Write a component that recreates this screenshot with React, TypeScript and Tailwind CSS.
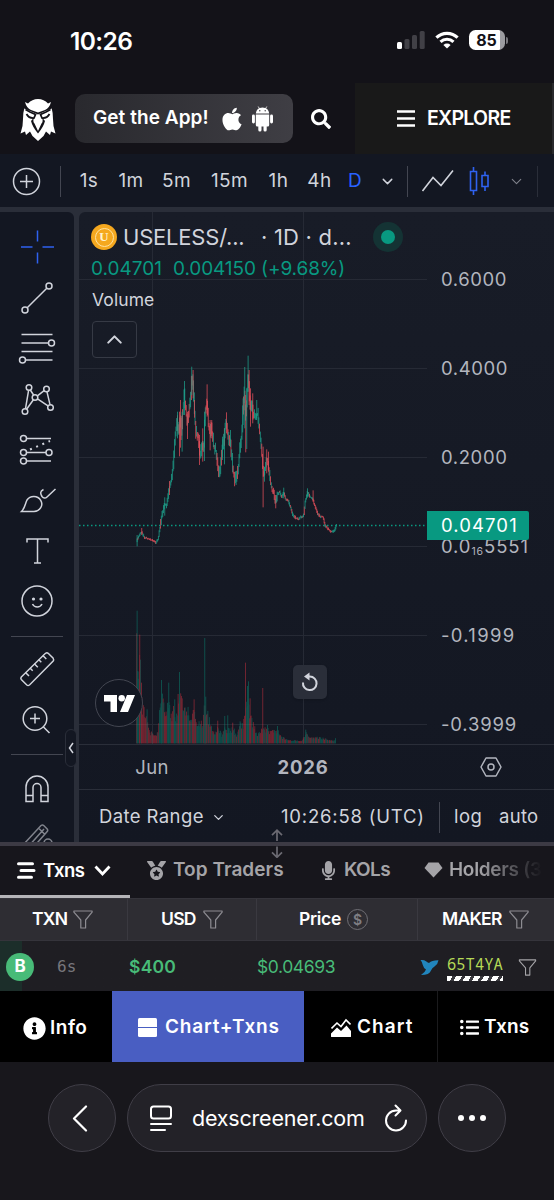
import React from "react";
import {
  FaApple,
  FaInfoCircle,
  FaListUl,
  FaMedal,
  FaMicrophone,
  FaSearch,
} from "react-icons/fa";
import { ChevronDown, ChevronUp } from "lucide-react";

// [x, y] of the price line, three units to a pixel
const PRICE: number[][] = [
  [35, 588], [42, 572], [50, 560], [58, 577], [75, 582], [93, 593], [100, 580],
  [105, 548], [112, 505], [118, 480], [125, 478], [133, 430], [140, 400],
  [147, 335], [150, 275], [156, 230], [161, 265], [166, 215], [169, 270],
  [174, 190], [178, 150], [182, 190], [187, 225], [193, 190], [197, 160],
  [200, 105], [204, 110], [208, 190], [213, 260], [220, 270], [225, 330],
  [232, 300], [237, 310], [240, 220], [243, 190], [246, 165], [250, 230],
  [255, 265], [260, 245], [266, 300], [273, 320], [279, 370], [285, 385],
  [290, 320], [294, 305], [300, 260], [304, 230], [308, 260], [312, 280],
  [318, 310], [324, 375], [330, 405], [336, 388], [340, 370], [345, 310],
  [350, 280], [354, 200], [358, 130], [362, 220], [366, 150], [370, 85],
  [374, 160], [378, 195], [382, 175], [386, 215], [392, 210], [398, 205],
  [404, 255], [410, 310], [414, 380], [418, 390], [424, 340], [428, 345],
  [434, 390], [440, 430], [446, 440], [452, 472], [458, 445], [464, 440],
  [470, 458], [476, 442], [482, 462], [490, 467], [498, 490], [504, 510],
  [512, 518], [520, 522], [528, 515], [536, 512], [541, 470], [548, 440],
  [554, 455], [562, 458], [570, 482], [578, 505], [586, 515], [594, 515],
  [600, 540], [608, 550], [618, 560], [628, 558], [634, 542],
];

// x, high, low, up
const SPIKES: [number, number, number, boolean][] = [
  [36, 570, 604, true],
  [50, 549, 570, false],
  [119, 457, 512, true],
  [133, 408, 450, false],
  [157, 200, 280, true],
  [163, 200, 334, false],
  [166, 165, 308, false],
  [171, 200, 320, true],
  [178, 108, 210, true],
  [187, 200, 282, false],
  [200, 65, 150, true],
  [204, 75, 160, false],
  [208, 165, 218, false],
  [223, 270, 360, false],
  [233, 250, 350, false],
  [238, 200, 348, true],
  [246, 118, 215, false],
  [255, 225, 316, false],
  [260, 225, 280, false],
  [292, 275, 345, true],
  [298, 250, 358, true],
  [304, 202, 265, false],
  [316, 255, 305, true],
  [354, 160, 240, true],
  [359, 66, 250, true],
  [362, 150, 322, false],
  [365, 130, 312, true],
  [369, 32, 140, true],
  [372, 75, 180, false],
  [376, 130, 245, false],
  [383, 145, 235, false],
  [395, 165, 220, true],
  [414, 305, 487, false],
  [418, 365, 410, true],
  [425, 313, 385, false],
  [430, 320, 380, false],
  [452, 450, 490, false],
  [476, 428, 460, true],
  [547, 430, 458, true],
  [564, 436, 470, false],
];

// x, height
const VOLUME: number[][] = [
  [184, 330], [188, 300], [194, 300], [197, 190], [200, 140], [207, 100],
  [213, 85], [216, 90], [222, 40], [230, 35], [240, 25], [248, 35], [252, 100],
  [259, 150], [263, 140], [270, 110], [280, 130], [290, 85], [296, 120],
  [305, 80], [313, 170], [318, 140], [326, 110], [333, 115], [340, 110],
  [346, 80], [357, 110], [364, 60], [373, 80], [380, 60], [388, 130],
  [392, 130], [397, 95], [405, 75], [412, 35], [428, 50], [440, 30], [449, 55],
  [458, 45], [473, 50], [485, 28], [495, 60], [503, 60], [507, 95], [511, 140],
  [516, 160], [520, 140], [525, 90], [535, 60], [545, 28], [560, 45],
  [570, 48], [590, 42], [600, 38], [607, 42], [615, 25], [630, 14], [650, 10],
  [680, 8], [688, 30], [692, 36], [700, 24], [715, 20], [730, 19], [745, 17],
  [760, 10], [775, 8], [781, 18],
];

const VOLUME_SPIKES: [number, number, boolean][] = [
  [186, 398, true],
  [194, 326, false],
  [199, 182, false],
  [216, 102, true],
  [259, 190, true],
  [281, 182, true],
  [299, 132, true],
  [313, 214, true],
  [309, 148, false],
  [357, 132, false],
  [389, 316, true],
  [392, 140, true],
  [428, 68, false],
  [449, 82, true],
  [458, 84, true],
  [473, 62, false],
  [495, 66, true],
  [511, 242, false],
  [517, 172, true],
  [520, 186, true],
  [525, 135, false],
  [563, 166, false],
  [577, 55, true],
  [607, 52, true],
  [692, 41, true],
];

const UP = "#089981";
const DOWN = "#f23645";

const noise = (n: number) => {
  const v = Math.sin(n * 12.9898) * 43758.5453;
  return v - Math.floor(v);
};

const sample = (points: number[][], x: number) => {
  let i = 1;
  while (i < points.length - 1 && points[i][0] < x) i++;
  const [x0, y0] = points[i - 1];
  const [x1, y1] = points[i];
  return y0 + ((y1 - y0) * (x - x0)) / (x1 - x0);
};

const Candles = () => {
  const bars = [];
  for (let x = 35; x <= 634; x += 2.2) {
    const y = sample(PRICE, x);
    const next = sample(PRICE, x + 2.2);
    const reach = x > 145 && x < 400 ? 20 : x > 105 && x < 460 ? 11 : 4;
    const top = Math.min(y, next) - reach * noise(x);
    const bottom = Math.max(y, next) + reach * noise(x + 5) + 1;
    const up = next < y ? noise(x + 9) > 0.2 : noise(x + 9) > 0.7;
    bars.push(
      <rect key={x} x={x} y={top} width={2.6} height={bottom - top} fill={up ? "#1ea18c" : "#e8505c"} opacity={0.9} />
    );
  }
  return (
    <g transform="translate(46 133) scale(0.33333)">
      {bars}
      {SPIKES.map(([x, high, low, up]) => (
        <rect key={x} x={x - 1} y={high} width={2.6} height={low - high} fill={up ? "#1ea18c" : "#e8505c"} opacity={0.85} />
      ))}
    </g>
  );
};

const Volume = () => {
  const bars = [];
  for (let x = 184; x <= 781; x += 2.2) {
    const h = sample(VOLUME, x) * (0.62 + 0.42 * noise(x + 2));
    const up = noise(x + 7) > (x > 200 && x < 245 ? 0.85 : 0.45);
    bars.push(
      <rect key={x} x={x} y={430 - h} width={2.4} height={h} fill={up ? UP : DOWN} />
    );
  }
  return (
    <g transform="translate(-4 388) scale(0.33333)" opacity={0.48}>
      {bars}
      {VOLUME_SPIKES.map(([x, h, up]) => (
        <rect key={x} x={x - 1} y={430 - h} width={2.6} height={h} fill={up ? UP : DOWN} />
      ))}
    </g>
  );
};

const Funnel = ({ className = "" }: { className?: string }) => (
  <svg width="20" height="19" viewBox="0 0 20 19" fill="none" stroke="currentColor" strokeWidth="1.2" className={className}>
    <path d="M.9 1h18.2v1.2L12.6 10v8H7.8v-8L.9 2.2z" strokeLinejoin="round" />
  </svg>
);

const Tool = ({ children }: { children: React.ReactNode }) => (
  <button className="flex h-[50.6px] w-[73px] shrink-0 items-center justify-center">
    <svg width="40" height="40" viewBox="0 0 40 40" fill="none" stroke="#d1d4dc" strokeWidth="1.5">
      {children}
    </svg>
  </button>
);

const StatusBar = () => (
  <div className="flex h-[83px] items-start justify-between pt-[26px] pr-[46px] pl-[70px] text-white">
    <span className="text-[24.5px] leading-[30px] font-semibold tracking-[-0.6px]">10:26</span>
    <div className="flex items-center gap-[10px] pt-[4px]">
      <svg width="28" height="20" viewBox="0 0 28 20">
        <rect x="0" y="12" width="5" height="7" rx="1.5" fill="#fff" />
        <rect x="7.5" y="9" width="5" height="10" rx="1.5" fill="#414046" />
        <rect x="15" y="5" width="5" height="14" rx="1.5" fill="#414046" />
        <rect x="22.7" y="1" width="5" height="18" rx="1.5" fill="#414046" />
      </svg>
      <svg width="24" height="18" viewBox="0 0 24 18" fill="none" stroke="#fff" strokeWidth="3.1">
        <path d="M1.4 6.6a15.3 15.3 0 0 1 21.2 0" />
        <path d="M5.5 10.9a9.4 9.4 0 0 1 13 0" />
        <path d="M12 17.6l-3.6-3.7a5.2 5.2 0 0 1 7.2 0z" fill="#fff" stroke="none" />
      </svg>
      <div className="flex items-center gap-[1px]">
        <div className="flex h-5 w-[36px] items-center justify-center rounded-[6.5px] bg-linear-to-r from-white from-85% to-[#9b9ba0] to-85% pr-[1px] text-[16px] font-bold text-[#131218]">
          85
        </div>
        <div className="h-[7px] w-[2px] rounded-r-full bg-[#77767c]" />
      </div>
    </div>
  </div>
);

const Header = () => (
  <header className="flex h-[71px] text-white">
    <div className="flex w-[355px] items-center pl-[20px]">
      <svg width="36" height="46" viewBox="0 0 36 46" fill="#fff">
        <path d="M5 6l3 1.500Q12 3 18 3t10 4.500L31 6q-1.500 6-6 8l-7 2.500L11 14Q6.500 12 5 6z" />
        <path d="M4.300 12.500L10 15l8 3.500L26 15l5.700-2.500q1.300 4 1.300 10.500l.5 7 2 7.500-4.500-2-1 3.500-4-3.500L23.500 40 18 45l-5.500-5-2.500-4.500L6 39l-1-3.500-4.500 2 2-7.500.5-7q0-6.500 1.300-10.500z" />
        <path d="M5.500 13.500L10 16l5.500 2.500L14 22q-5 .5-7.500-4M30.500 13.500L26 16l-5.500 2.500L22 22q5 .5 7.500-4" fill="none" stroke="#131218" strokeWidth="1.800" />
        <path d="M14 21.500l-3 3.500q1.500 6 7 12.500 5.500-6.500 7-12.500l-3-3.500q1.500 4-.5 6L18 35l-3.500-7.500q-2-2-.5-6z" fill="#131218" />
      </svg>
      <div className="ml-[19px] flex h-[49px] w-[218px] items-center rounded-[10px] bg-linear-to-r from-[#29292e] to-[#3f3e44] pl-[18px]">
        <span className="w-[128px] text-[19px] font-semibold whitespace-nowrap tracking-[0.05px]">Get the App!</span>
        <FaApple className="h-[26px] w-[22px]" />
        <svg className="ml-[9px]" width="21" height="26" viewBox="0 0 21 26" fill="#fff">
          <path d="M3.800 7.500Q4.500 1.500 10.500 1.500t6.700 6zM3.800 8.500h13.400v10.500q0 1.500-1.500 1.500H5.300q-1.500 0-1.500-1.500z" />
          <path d="M6.200.5l1.500 2.500M14.800.5L13.300 3" stroke="#fff" strokeWidth=".8" />
          <rect x="0" y="8.500" width="2.900" height="9" rx="1.400" />
          <rect x="18.100" y="8.500" width="2.900" height="9" rx="1.400" />
          <rect x="6.300" y="17" width="3.200" height="8.500" rx="1.500" />
          <rect x="11.500" y="17" width="3.200" height="8.500" rx="1.500" />
          <circle cx="7.800" cy="4.800" r=".7" fill="#3a393f" />
          <circle cx="13.200" cy="4.800" r=".7" fill="#3a393f" />
        </svg>
      </div>
      <FaSearch className="ml-[18px] size-[20px]" />
    </div>
    <div className="flex w-[197px] items-center bg-[#191919] pl-[42px]">
      <svg width="18" height="17" viewBox="0 0 18 17" stroke="#fff" strokeWidth="2.300">
        <path d="M0 1.500h18M0 8.500h18M0 15.500h18" />
      </svg>
      <span className="ml-[12px] text-[19.500px] font-semibold tracking-[-0.700px]">EXPLORE</span>
    </div>
    <div className="w-[2px] bg-[#29292c]" />
  </header>
);

const IntervalBar = () => (
  <div className="flex h-[53px] items-center bg-[#131722] pt-px text-[19px] text-[#d1d4dc]">
    <div className="flex w-[60px] items-center pl-[12px]">
      <svg width="29" height="29" viewBox="0 0 29 29" fill="none" stroke="currentColor" strokeWidth="1.500">
        <circle cx="14.500" cy="14.500" r="13" />
        <path d="M14.500 8v13M8 14.500h13" />
      </svg>
    </div>
    <div className="mr-[9px] h-[31px] w-px bg-[#434651]" />
    <div className="flex pt-px tracking-[0.400px]">
      <button className="w-[38px]">1s</button>
      <button className="w-[46px]">1m</button>
      <button className="w-[45px]">5m</button>
      <button className="w-[61px]">15m</button>
      <button className="w-[37px]">1h</button>
      <button className="w-[45px]">4h</button>
      <button className="w-[26px] text-[#2962ff]">D</button>
    </div>
    <ChevronDown className="ml-[11px] size-[17px]" strokeWidth={2} />
    <div className="ml-[11px] h-[31px] w-px bg-[#434651]" />
    <svg className="ml-[13px]" width="34" height="24" viewBox="0 0 34 24" fill="none" stroke="currentColor" strokeWidth="1.600">
      <path d="M1.500 22L12 8.500l8 8L32 1.500" />
    </svg>
    <svg className="ml-[14px]" width="22" height="30" viewBox="0 0 22 30" fill="none" stroke="#2f62f0" strokeWidth="1.600">
      <path d="M1.500 5.500h6v19h-6zM4.500 1v4.500M4.500 24.500V29M13 9.500h6v11h-6zM16 5.500v4M16 20.500V25" />
    </svg>
    <ChevronDown className="ml-[17px] size-[17px] text-[#80838c]" strokeWidth={1.500} />
    <div className="ml-[12px] h-[31px] w-px bg-[#2a2e39]" />
  </div>
);

const DrawingTools = () => (
  <aside className="relative h-[630px] w-[73.500px] rounded-tr-[6px] bg-[#131722]">
    <div className="flex h-full w-full flex-col overflow-hidden pt-[10px]">
      <Tool>
        <path d="M20.500 3.500v11M20.500 25.500v11M4 20h11.500M25.500 20H37" stroke="#2f62f0" />
      </Tool>
      <Tool>
        <circle cx="8" cy="32" r="3" />
        <circle cx="32" cy="8" r="3" />
        <path d="M10.200 29.800L29.800 10.200" />
      </Tool>
      <Tool>
        <path d="M4.500 6.500h31M4.500 15h27M4.500 23.500h31M8.500 32h27" />
        <circle cx="34.500" cy="15" r="3" />
        <circle cx="5.500" cy="32" r="3" />
      </Tool>
      <Tool>
        <circle cx="12" cy="8.500" r="2.800" />
        <circle cx="29.500" cy="10" r="2.800" />
        <circle cx="18" cy="18.500" r="2.800" />
        <circle cx="8" cy="32.500" r="2.800" />
        <circle cx="33.500" cy="28.500" r="2.800" />
        <path d="M11.600 11.300L8.500 29.700M13.300 11l3.300 5M20.400 16.900l6.700-5.200M9.600 30.200l6.800-9.400M20.500 19.900l10.500 7M30 12.800l3 12.900" />
      </Tool>
      <Tool>
        <path d="M9 8.500h25M9 22.500h21M9 31h25" />
        <path d="M13 19.500L33 11" strokeDasharray="2 4.700" strokeWidth="2" />
        <circle cx="6.500" cy="8.500" r="3" fill="#131722" />
        <circle cx="6.500" cy="22.500" r="3" fill="#131722" />
        <circle cx="32" cy="22.500" r="3" fill="#131722" />
        <circle cx="6.500" cy="31" r="3" fill="#131722" />
      </Tool>
      <Tool>
        <path d="M4.500 31.500h12.500a8 7.500 0 1 0-7-11.500c-2 4-2 8-5.500 11.500z" />
        <path d="M26.500 9.500c-4 2-3 4.500-1.500 7 1.500 2 3.500 2 5 .5L38.500 9" />
      </Tool>
      <Tool>
        <path d="M10 11.500V8h21v3.500M20.500 8v24M17 32h7" />
      </Tool>
      <Tool>
        <circle cx="20" cy="20" r="15" />
        <circle cx="16.500" cy="18" r="1.600" fill="#d1d4dc" stroke="none" />
        <circle cx="24" cy="18" r="1.600" fill="#d1d4dc" stroke="none" />
        <path d="M15.500 23c2 4 7.500 4 9.500 0" />
      </Tool>
      <div className="mx-[11px] mt-[9px] mb-[7px] h-px shrink-0 bg-[#434651]" />
      <Tool>
        <path d="M4.300 28L28.500 4.300q1.500-1 2.700 0l5 5q1 1.500 0 2.700L12.500 36q-1.500 1-2.700 0l-5.500-5.500q-1-1.200 0-2.500z" />
        <path d="M8.500 23.500l3.500 3.500M13 19l2.700 2.700M17.300 14.800l3.500 3.500M21.600 10.500l2.700 2.700M25.800 6.500l3.500 3.500" />
      </Tool>
      <Tool>
        <circle cx="18" cy="18.500" r="11.800" />
        <path d="M18 13.500v10M13 18.500h10M26.500 27l6 6" />
      </Tool>
      <div className="mx-[11px] mt-[9px] mb-[9px] h-px shrink-0 bg-[#434651]" />
      <Tool>
        <path d="M9 32.500V18a11 11 0 0 1 22 0v14.500h-7V18.500a4 4 0 0 0-8 0v14zM9 26.500h7M24 26.500h7" />
      </Tool>
      <Tool>
        <g stroke="#80838c" transform="translate(0 -4)">
          <path d="M6 29L24 9.500q1.500-1 2.700 0l3.500 3.500q1 1.300 0 2.600L13 35M10 32L27 13M21.500 12l6 6" />
          <circle cx="31" cy="27" r="4" />
        </g>
      </Tool>
    </div>
    <button className="absolute top-[517px] -right-[3.500px] flex h-[38px] w-[12px] items-center justify-center rounded-[6px] border-[1.500px] border-[#2a2e39] bg-[#131722]">
      <svg width="6" height="12" viewBox="0 0 6 12" fill="none" stroke="#d1d4dc" strokeWidth="1.500">
        <path d="M5 1L1.500 6 5 11" />
      </svg>
    </button>
  </aside>
);

const PriceChart = () => (
  <div className="relative h-[532px] w-[348px]">
    <svg width="348" height="532" viewBox="0 0 348 532">
      <g stroke="#262a35" strokeWidth="1">
        <path d="M73.500 0v532M224.500 0v532" />
        <path d="M0 67.500h348M0 156.500h348M0 245.500h348M0 334.500h348M0 423.500h348M0 512.500h348" />
      </g>
      <Volume />
      <Candles />
      <path d="M0 313.500h348" stroke={UP} strokeWidth="1.500" strokeDasharray="1.500 2.500" />
    </svg>
    <div className="absolute top-[9px] left-[12px] w-[330px] text-[#d1d4dc]">
      <div className="flex h-[32px] items-center text-[22px] whitespace-pre">
        <span className="flex size-[26px] shrink-0 items-center justify-center rounded-full bg-[#f5a81f]">
          <span className="flex size-[19px] items-center justify-center rounded-full border border-[#ffe2a0] font-['Liberation_Serif'] text-[13px] font-bold text-[#fff3d0]">
            U
          </span>
        </span>
        <span className="ml-[6px] w-[138px] shrink-0 tracking-[-0.200px]">USELESS/...</span>
        <span className="w-[112px] shrink-0 tracking-[0.200px]">· 1D · d...</span>
        <span className="flex size-[30px] shrink-0 items-center justify-center rounded-full bg-[#143334]">
          <span className="size-[14px] rounded-full bg-[#089981]" />
        </span>
      </div>
      <div className="mt-[4px] flex h-[24px] items-center text-[19px] text-[#089981]">
        <span className="w-[82px]">0.04701</span>
        <span className="whitespace-nowrap tracking-[-0.100px]">0.004150 (+9.68%)</span>
      </div>
      <div className="mt-[8px] ml-px text-[17.500px] leading-[22px] tracking-[0.100px]">Volume</div>
      <button className="mt-[10px] ml-px flex h-[37px] w-[45px] items-center justify-center rounded-[4px] border-[1.500px] border-[#363a45]">
        <ChevronUp className="size-[25px]" strokeWidth={2} />
      </button>
    </div>
    <div className="absolute top-[467px] left-[16px] flex size-[48px] items-center justify-center rounded-full border-[1.500px] border-[#434651] bg-[#131722]">
      <svg width="31" height="17" viewBox="0 0 31 17" fill="#fff">
        <path d="M0 0h13v17H6.500V6.500H0zM23 0h8l-7 17h-8z" />
        <circle cx="17.700" cy="3.200" r="3.200" />
      </svg>
    </div>
    <button className="absolute top-[453px] left-[214px] flex size-[34px] items-center justify-center rounded-[5px] bg-[#2a2e39] shadow">
      <svg width="18" height="20" viewBox="0 0 18 20" fill="none" stroke="#d1d4dc" strokeWidth="2">
        <path d="M2 10.500A6.800 6.800 0 1 0 8.800 4.500H6" />
        <path d="M8.500 .5v8L3 4.500z" fill="#d1d4dc" stroke="none" />
      </svg>
    </button>
  </div>
);

const PriceAxis = () => (
  <div className="relative h-[532px] w-[127px] overflow-hidden pt-[23px] pl-[14px] text-[18.500px] tracking-[0.600px] text-[#b2b5be]">
    <div className="flex h-[89px] items-center">0.6000</div>
    <div className="flex h-[89px] items-center">0.4000</div>
    <div className="flex h-[89px] items-center">0.2000</div>
    <div className="flex h-[89px] items-center">
      <span className="tracking-[0.900px]">
        0.0<sub className="text-[10.500px]">16</sub>5551
      </span>
    </div>
    <div className="flex h-[89px] items-center tracking-[1.300px]">-0.1999</div>
    <div className="flex h-[89px] items-center tracking-[0.800px]">-0.3999</div>
    <div className="absolute top-[299px] left-0 flex h-[29px] w-[102px] items-center rounded-r-[2px] bg-[#089981] pt-px pl-[14px] tracking-[1.100px] text-white">
      0.04701
    </div>
  </div>
);

const ChartPanel = () => (
  <section className="w-[475px] rounded-tl-[6px] bg-linear-to-b from-[#181c27] to-[#131722]">
    <div className="flex h-[532px]">
      <PriceChart />
      <PriceAxis />
    </div>
    <div className="flex h-[46px] items-center border-y border-[#2a2e39] text-[18.500px] text-[#b2b5be]">
      <span className="w-[146px] pt-px text-center tracking-[0.300px]">Jun</span>
      <span className="w-[156px] pt-px text-center font-bold tracking-[0.800px]">2026</span>
      <svg className="ml-[99px]" width="22" height="20" viewBox="0 0 22 20" fill="none" stroke="currentColor" strokeWidth="1.500">
        <path d="M6 1h10l5 9-5 9H6l-5-9z" strokeLinejoin="round" />
        <circle cx="11" cy="10" r="3" />
      </svg>
    </div>
    <div className="flex h-[52px] items-center pt-[2px] pl-[20px] text-[18.500px] whitespace-nowrap text-[#d1d4dc]">
      <span className="w-[112px] tracking-[0.400px]">Date Range</span>
      <ChevronDown className="size-[15px]" strokeWidth={2} />
      <span className="ml-[55px] w-[158px] tracking-[0.800px]">10:26:58 (UTC)</span>
      <span className="mr-[14px] h-[31px] w-px bg-[#434651]" />
      <span className="w-[45px] tracking-[0.500px]">log</span>
      <span className="tracking-[0.300px]">auto</span>
    </div>
  </section>
);

const Tabs = () => (
  <nav className="relative flex h-[56px] border-t-4 border-[#3c3a44] bg-[#17161c] text-[19px] font-semibold whitespace-nowrap text-[#a5a4a8]">
    <svg className="absolute -top-[17px] left-[271px]" width="12" height="29" viewBox="0 0 12 29" fill="none" stroke="#6b6a72" strokeWidth="1.700">
      <path d="M6 12V1.500M1 6.200l5-5 5 5M6 17.500V28M1 23.300l5 5 5-5" />
    </svg>
    <div className="flex w-[130px] items-center border-b-[3px] border-[#b5b4b8] pl-[17px] text-white">
      <svg width="19" height="17" viewBox="0 0 19 17" stroke="#fff" strokeWidth="3" strokeLinecap="round">
        <path d="M1.500 1.700h14M4 8.500h13M1.500 15.300h13" />
      </svg>
      <span className="ml-[7px] w-[51px] text-[18.500px] tracking-[-0.500px]">Txns</span>
      <svg width="17" height="12" viewBox="0 0 17 12" fill="none" stroke="#fff" strokeWidth="2.800">
        <path d="M1.500 1.500l7 7.500 7-7.500" />
      </svg>
    </div>
    <div className="flex items-center pb-[4px] pl-[17px]">
      <FaMedal className="size-[19px]" />
      <span className="ml-[7px] w-[128px] tracking-[0.050px]">Top Traders</span>
      <FaMicrophone className="ml-[20px] h-[19px] w-[15px]" />
      <span className="ml-[8px] w-[65px] tracking-[-0.600px]">KOLs</span>
      <svg className="ml-[15px]" width="19" height="16" viewBox="0 0 19 16" fill="currentColor">
        <path d="M4.500.5h10L18.500 6l-9 9.500L.5 6z" strokeLinejoin="round" />
      </svg>
      <span className="ml-[6px] w-[98px] overflow-hidden bg-linear-to-r from-[#a5a4a8] from-30% to-transparent to-95% bg-clip-text tracking-[-0.300px] text-transparent">
        Holders (3
      </span>
    </div>
  </nav>
);

const TxnTable = () => (
  <div>
    <div className="flex h-[43px] items-center border-y border-[#35343b] bg-[#2e2d33] text-[17.500px] font-semibold text-white [&_svg]:text-[#8d8c92]">
      <div className="flex h-full w-[128px] items-center border-r border-[#3a3940] pl-[32px]">
        <span className="w-[41px] tracking-[-0.700px]">TXN</span>
        <Funnel />
      </div>
      <div className="flex h-full w-[129px] items-center border-r border-[#3a3940] pl-[33px]">
        <span className="w-[42px] tracking-[-0.700px]">USD</span>
        <Funnel />
      </div>
      <div className="flex h-full w-[161px] items-center border-r border-[#3a3940] pl-[42px]">
        <span className="w-[48px] tracking-[-0.300px]">Price</span>
        <span className="flex size-[21px] items-center justify-center rounded-full border-[1.500px] border-[#6f6e74] text-[14px] text-[#7e7d83]">
          $
        </span>
      </div>
      <div className="flex h-full items-center pl-[24px]">
        <span className="w-[67px] tracking-[-0.700px]">MAKER</span>
        <Funnel />
      </div>
    </div>
    <div className="flex h-[50px] items-center bg-linear-to-r from-[#1c2e2a] from-[22px] to-[#1f1e23] to-[22px] pt-[2px] text-[17.500px] text-[#48bb78]">
      <div className="ml-[6px] flex size-[28px] items-center justify-center rounded-full bg-[#48bb78] text-[17px] font-bold text-white">
        B
      </div>
      <span className="ml-[23px] w-[72px] font-['DejaVu_Sans_Mono',monospace] text-[16px] text-[#77767c]">6s</span>
      <span className="w-[128px] font-semibold tracking-[0.250px]">$400</span>
      <span className="w-[163px] tracking-[-0.400px]">$0.04693</span>
      <svg width="19" height="17" viewBox="0 0 19 17" fill="#2185bd">
        <path d="M.500 1q3.500-.5 5.500 1.300 1.300 1.200 3 1.700Q12 1 18.500 1.200 18 5 14.500 7.500q-2.500 1.500-3.500 4-1.500 4.500-10 4.500Q5 13.500 6 10.500 3.500 9 2.800 6 2.300 3 .5 1z" />
      </svg>
      <div className="ml-[8px] w-[56px] pt-px font-['Noto_Sans_Mono','DejaVu_Sans_Mono',monospace] text-[15.500px] leading-[19px] tracking-[0px] text-[#b5d957]">
        65T4YA
        <div className="mt-[2px] h-[5px] bg-[repeating-linear-gradient(120deg,#fff_0_5px,#3a393e_5px_8px)]" />
      </div>
      <Funnel className="ml-[15px] h-[17px] w-[19px] text-[#a5a4a8]" />
    </div>
  </div>
);

const ViewSwitch = () => (
  <div className="flex h-[71px] items-center bg-black text-[19px] font-semibold text-white">
    <div className="flex w-[112px] items-center pt-[3px] pl-[23px]">
      <FaInfoCircle className="size-[23px]" />
      <span className="ml-[4px] tracking-[0.500px]">Info</span>
    </div>
    <div className="flex h-full w-[192px] items-center bg-[#495ec2] pt-px pl-[26px]">
      <div className="flex flex-col gap-px">
        <div className="h-[9px] w-[19px] rounded-t-[1.500px] bg-white" />
        <div className="h-[9px] w-[19px] rounded-b-[1.500px] bg-white" />
      </div>
      <span className="ml-[8px] tracking-[0.800px]">Chart+Txns</span>
    </div>
    <div className="flex h-full w-[134px] items-center border-r border-[#1b1b1d] pt-px pl-[27px]">
      <svg width="20" height="19" viewBox="0 0 20 19" fill="#fff">
        <path d="M0 18.500v-3l6-6L10 13l5.500-5.500 4.500 5.500v5.500q0 .5-1 .5H1q-1 0-1-.5z" />
        <path d="M.5 10.500L6 5l4 3.500 5-6.500 4.500 4.500" fill="none" stroke="#fff" strokeWidth="1.600" />
      </svg>
      <span className="ml-[6px] tracking-[1.100px]">Chart</span>
    </div>
    <div className="flex items-center pt-px pl-[22px]">
      <FaListUl className="size-[19px]" />
      <span className="ml-[5px] tracking-[0.200px]">Txns</span>
    </div>
  </div>
);

const BrowserBar = () => (
  <footer className="flex h-[138px] items-start gap-[11px] bg-[#18171c] pt-[22px] pl-[48px] text-white">
    <button className="flex h-[68px] w-[68px] items-center justify-center rounded-full border border-[#403e47] bg-[#232228]">
      <svg className="mr-[4px]" width="16" height="27" viewBox="0 0 16 27" fill="none" stroke="#fff" strokeWidth="2.200" strokeLinecap="round" strokeLinejoin="round">
        <path d="M14 1.500L2 13.500l12 12" />
      </svg>
    </button>
    <div className="flex h-[68px] w-[300px] items-center rounded-full border border-[#403e47] bg-[#232228] pl-[21px]">
      <svg width="24" height="27" viewBox="0 0 24 27" fill="none" stroke="#fff" strokeWidth="2" strokeLinecap="round">
        <rect x="2" y="1.500" width="20" height="12" rx="2.500" />
        <path d="M2 19h20M2 25h14" />
      </svg>
      <span className="ml-[19px] w-[176px] text-[21.500px] tracking-[-0.200px]">dexscreener.com</span>
      <svg className="ml-[16px]" width="24" height="28" viewBox="0 0 24 28" fill="none" stroke="#fff" strokeWidth="2" strokeLinecap="round" strokeLinejoin="round">
        <path d="M16 6.500h-4a10 10 0 1 0 10 10M11.500 1.500l5 5-5 5" />
      </svg>
    </div>
    <button className="flex h-[68px] w-[68px] items-center justify-center gap-[5px] rounded-full border border-[#403e47] bg-[#232228]">
      <span className="size-[6px] rounded-full bg-white" />
      <span className="size-[6px] rounded-full bg-white" />
      <span className="size-[6px] rounded-full bg-white" />
    </button>
  </footer>
);

const App = () => {
  return (
    <div className="h-[1200px] w-[554px] overflow-hidden bg-[#131218] font-['Inter','Liberation_Sans',sans-serif]">
      <StatusBar />
      <Header />
      <IntervalBar />
      <div className="flex justify-between bg-[#2a2e39] pt-[5px]">
        <DrawingTools />
        <ChartPanel />
      </div>
      <Tabs />
      <TxnTable />
      <ViewSwitch />
      <BrowserBar />
    </div>
  );
};

export default App;
